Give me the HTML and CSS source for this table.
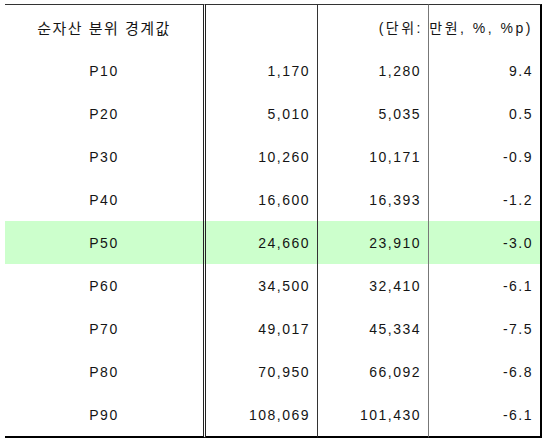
FILE: index.html
```html
<!DOCTYPE html>
<html lang="ko">
<head>
<meta charset="utf-8">
<link rel="stylesheet" href="styles.css">
</head>
<body>
<table class="tbl">
  <colgroup>
    <col class="c1"><col class="c2"><col class="c3"><col class="c4">
  </colgroup>
  <tr class="head">
    <td class="label title">순자산 분위 경계값</td>
    <td class="num"></td>
    <td class="num"></td>
    <td class="num unitcell"><div class="unitwrap"><span class="unit">(단위: 만원, %, %p)</span></div></td>
  </tr>
  <tr><td class="label">P10</td><td class="num">1,170</td><td class="num">1,280</td><td class="num">9.4</td></tr>
  <tr><td class="label">P20</td><td class="num">5,010</td><td class="num">5,035</td><td class="num">0.5</td></tr>
  <tr><td class="label">P30</td><td class="num">10,260</td><td class="num">10,171</td><td class="num">-0.9</td></tr>
  <tr><td class="label">P40</td><td class="num">16,600</td><td class="num">16,393</td><td class="num">-1.2</td></tr>
  <tr class="hl"><td class="label">P50</td><td class="num">24,660</td><td class="num">23,910</td><td class="num">-3.0</td></tr>
  <tr><td class="label">P60</td><td class="num">34,500</td><td class="num">32,410</td><td class="num">-6.1</td></tr>
  <tr><td class="label">P70</td><td class="num">49,017</td><td class="num">45,334</td><td class="num">-7.5</td></tr>
  <tr><td class="label">P80</td><td class="num">70,950</td><td class="num">66,092</td><td class="num">-6.8</td></tr>
  <tr class="last"><td class="label">P90</td><td class="num">108,069</td><td class="num">101,430</td><td class="num">-6.1</td></tr>
</table>
</body>
</html>
```

FILE: styles.css
```css
html, body {
  margin: 0;
  padding: 0;
  background: #ffffff;
}

.tbl {
  margin: 4px 0 0 5px;
  border-collapse: separate;
  border-spacing: 0;
  table-layout: fixed;
  width: 537px;
  font-family: "Liberation Sans", "Noto Sans CJK KR", sans-serif;
  font-size: 14px;
  letter-spacing: 1.5px;
  color: #151515;
}

.c1 { width: 201px; }
.c2 { width: 112px; }
.c3 { width: 111px; }
.c4 { width: 113px; }

.tbl td {
  box-sizing: border-box;
  height: 43px;
  padding: 0;
  vertical-align: middle;
  white-space: nowrap;
}

.tbl td:nth-child(1) { border-right: 3px double #222222; }
.tbl td:nth-child(2) { border-right: 1px solid #333333; }
.tbl td:nth-child(3) { border-right: 1px solid #777777; }
.tbl td:nth-child(4) { border-right: 2px solid #000000; }

.head td {
  height: 45px;
  border-top: 1px solid #333333;
}

.last td {
  height: 45px;
  border-bottom: 2px solid #000000;
}

.hl td {
  background: #ccffcc;
}

.label {
  text-align: center;
}

.title {
  font-size: 15px;
  letter-spacing: 1.5px;
}

.num {
  text-align: right;
  padding-right: 7px !important;
}

.unitcell {
  overflow: visible;
}

.unitwrap {
  display: flex;
  justify-content: flex-end;
  width: 100%;
}

.unit {
  flex-shrink: 0;
  white-space: nowrap;
  letter-spacing: 2.5px;
}
```
